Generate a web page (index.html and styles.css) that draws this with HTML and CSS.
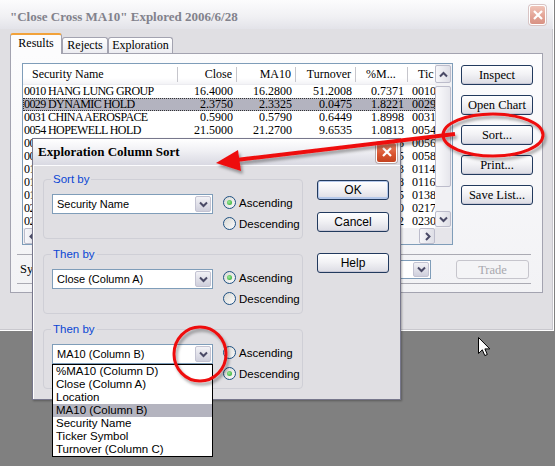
FILE: index.html
```html
<!DOCTYPE html>
<html lang="en">
<head>
    <meta charset="UTF-8">
    <title>Exploration Column Sort</title>
    <link rel="stylesheet" href="styles.css">
</head>
<body>
<div class="desktop">

    <!-- explorer results window (inactive) -->
    <div class="main">
        <div class="main-title">
            <span class="title">"Close Cross MA10" Explored 2006/6/28</span>
            <span class="close-btn faded">
                <svg viewBox="0 0 12 12" width="12" height="12"><path d="M2 2 L10 10 M10 2 L2 10" stroke="#fff" stroke-width="2.2" fill="none"/></svg>
            </span>
        </div>
        <div class="main-body">
            <div class="tabs">
                <div class="tab active w-results">Results</div>
                <div class="tab w-rejects">Rejects</div>
                <div class="tab w-explo">Exploration</div>
            </div>
            <div class="tab-panel">
                <div class="results-top">
                    <div class="listview">
                        <div class="lv-area">
                            <div class="lv-row lv-head">
                                <div class="h-name">Security Name</div>
                                <div class="h-num">Close</div>
                                <div class="h-num">MA10</div>
                                <div class="h-num">Turnover</div>
                                <div class="h-left">%M...</div>
                                <div class="h-left last">Tic</div>
                            </div>
                            <div class="lv-row"><div class="c-name">0010 HANG LUNG GROUP</div><div class="num">16.4000</div><div class="num">16.2800</div><div class="num">51.2008</div><div class="num">0.7371</div><div class="tick">0010</div></div>
                            <div class="lv-row selected"><div class="c-name">0029 DYNAMIC HOLD</div><div class="num">2.3750</div><div class="num">2.3325</div><div class="num">0.0475</div><div class="num">1.8221</div><div class="tick">0029</div></div>
                            <div class="lv-row"><div class="c-name">0031 CHINA AEROSPACE</div><div class="num">0.5900</div><div class="num">0.5790</div><div class="num">0.6449</div><div class="num">1.8998</div><div class="tick">0031</div></div>
                            <div class="lv-row"><div class="c-name">0054 HOPEWELL HOLD</div><div class="num">21.5000</div><div class="num">21.2700</div><div class="num">9.6535</div><div class="num">1.0813</div><div class="tick">0054</div></div>
                            <div class="lv-row"><div class="c-name">0056 ALLIED PROP</div><div class="num">1.0500</div><div class="num">1.0420</div><div class="num">3.1180</div><div class="num">1.1126</div><div class="tick">0056</div></div>
                            <div class="lv-row"><div class="c-name">0058 SUNWAY GLOBAL</div><div class="num">0.3100</div><div class="num">0.3050</div><div class="num">0.2214</div><div class="num">0.9635</div><div class="tick">0058</div></div>
                            <div class="lv-row"><div class="c-name">0114 HERALD HOLD</div><div class="num">0.8800</div><div class="num">0.8710</div><div class="num">0.0912</div><div class="num">1.2043</div><div class="tick">0114</div></div>
                            <div class="lv-row"><div class="c-name">0116 CHOW SANG SANG</div><div class="num">6.8500</div><div class="num">6.7400</div><div class="num">1.9870</div><div class="num">1.5318</div><div class="tick">0116</div></div>
                            <div class="lv-row"><div class="c-name">0138 CCT TECH</div><div class="num">0.1950</div><div class="num">0.1930</div><div class="num">0.4415</div><div class="num">0.8825</div><div class="tick">0138</div></div>
                            <div class="lv-row"><div class="c-name">0217 CHINA GRAND</div><div class="num">0.4200</div><div class="num">0.4140</div><div class="num">0.7760</div><div class="num">1.4470</div><div class="tick">0217</div></div>
                            <div class="lv-row"><div class="c-name">0230 MINMETALS LAND</div><div class="num">0.9600</div><div class="num">0.9500</div><div class="num">0.5281</div><div class="num">1.0392</div><div class="tick">0230</div></div>
                        </div>
                        <div class="vscroll">
                            <div class="sb-btn"><svg viewBox="0 0 11 11" width="11" height="11"><path d="M2 7.5 L5.5 4 L9 7.5" stroke="#4a4a66" stroke-width="2" fill="none"/></svg></div>
                            <div class="sb-thumb v"></div>
                            <div class="sb-btn bottom"><svg viewBox="0 0 11 11" width="11" height="11"><path d="M2 3.5 L5.5 7 L9 3.5" stroke="#4a4a66" stroke-width="2" fill="none"/></svg></div>
                        </div>
                        <div class="hscroll">
                            <div class="sb-btn"><svg viewBox="0 0 11 11" width="11" height="11"><path d="M7 2 L3.5 5.5 L7 9" stroke="#4a4a66" stroke-width="2" fill="none"/></svg></div>
                            <div class="sb-thumb h"></div>
                            <div class="sb-btn right"><svg viewBox="0 0 11 11" width="11" height="11"><path d="M4 2 L7.5 5.5 L4 9" stroke="#4a4a66" stroke-width="2" fill="none"/></svg></div>
                        </div>
                        <div class="sb-corner"></div>
                    </div>
                    <div class="side-buttons">
                        <div class="xp-btn serif">Inspect</div>
                        <div class="xp-btn serif">Open Chart</div>
                        <div class="xp-btn serif">Sort...</div>
                        <div class="xp-btn serif">Print...</div>
                        <div class="xp-btn serif">Save List...</div>
                    </div>
                </div>
                <div class="trade-row">
                    <span class="trade-label">Symbol:</span>
                    <div class="combo wide">
                        <span class="combo-text"></span>
                        <span class="drop-btn"><svg viewBox="0 0 11 11" width="11" height="11"><path d="M2 3.5 L5.5 7 L9 3.5" stroke="#4a4a66" stroke-width="2" fill="none"/></svg></span>
                    </div>
                    <div class="xp-btn serif disabled trade">Trade</div>
                </div>
            </div>
        </div>
    </div>

    <!-- sort dialog (active) -->
    <div class="dialog">
        <div class="dlg-title">
            <span class="title">Exploration Column Sort</span>
            <span class="close-btn">
                <svg viewBox="0 0 12 12" width="12" height="12"><path d="M2 2 L10 10 M10 2 L2 10" stroke="#fff" stroke-width="2.2" fill="none"/></svg>
            </span>
        </div>
        <div class="dlg-body">
            <div class="dlg-groups">
                <fieldset class="group">
                    <legend>Sort by</legend>
                    <div class="group-row">
                        <div class="combo">
                            <span class="combo-text">Security Name</span>
                            <span class="drop-btn"><svg viewBox="0 0 11 11" width="11" height="11"><path d="M2 3.5 L5.5 7 L9 3.5" stroke="#4a4a66" stroke-width="2" fill="none"/></svg></span>
                        </div>
                        <div class="radios">
                            <div class="radio-row"><span class="radio on"></span>Ascending</div>
                            <div class="radio-row"><span class="radio"></span>Descending</div>
                        </div>
                    </div>
                </fieldset>
                <fieldset class="group">
                    <legend>Then by</legend>
                    <div class="group-row">
                        <div class="combo">
                            <span class="combo-text">Close (Column A)</span>
                            <span class="drop-btn"><svg viewBox="0 0 11 11" width="11" height="11"><path d="M2 3.5 L5.5 7 L9 3.5" stroke="#4a4a66" stroke-width="2" fill="none"/></svg></span>
                        </div>
                        <div class="radios">
                            <div class="radio-row"><span class="radio on"></span>Ascending</div>
                            <div class="radio-row"><span class="radio"></span>Descending</div>
                        </div>
                    </div>
                </fieldset>
                <fieldset class="group">
                    <legend>Then by</legend>
                    <div class="group-row">
                        <div class="combo open">
                            <span class="combo-text">MA10 (Column B)</span>
                            <span class="drop-btn"><svg viewBox="0 0 11 11" width="11" height="11"><path d="M2 3.5 L5.5 7 L9 3.5" stroke="#4a4a66" stroke-width="2" fill="none"/></svg></span>
                            <ul class="drop-list">
                                <li>%MA10 (Column D)</li>
                                <li>Close (Column A)</li>
                                <li>Location</li>
                                <li class="hl">MA10 (Column B)</li>
                                <li>Security Name</li>
                                <li>Ticker Symbol</li>
                                <li>Turnover (Column C)</li>
                            </ul>
                        </div>
                        <div class="radios">
                            <div class="radio-row"><span class="radio"></span>Ascending</div>
                            <div class="radio-row"><span class="radio on"></span>Descending</div>
                        </div>
                    </div>
                </fieldset>
            </div>
            <div class="dlg-buttons">
                <div class="xp-btn default">OK</div>
                <div class="xp-btn cancel">Cancel</div>
                <div class="xp-btn help">Help</div>
            </div>
        </div>
    </div>

    <!-- red markup drawn over the screenshot -->
    <svg class="marks" width="555" height="466" viewBox="0 0 555 466">
        <defs>
            <filter id="shade" x="-20%" y="-20%" width="140%" height="140%">
                <feDropShadow dx="2" dy="3" stdDeviation="1.8" flood-color="#000" flood-opacity="0.35"/>
            </filter>
        </defs>
        <g filter="url(#shade)">
            <ellipse cx="493" cy="135" rx="50" ry="21" fill="none" stroke="#ee1111" stroke-width="3"/>
            <line x1="455" y1="134" x2="236" y2="160" stroke="#ee1111" stroke-width="4"/>
            <polygon points="216,163 241,171 238,150" fill="#ee1111"/>
            <ellipse cx="200" cy="354" rx="26" ry="27" fill="none" stroke="#ee1111" stroke-width="3"/>
        </g>
    </svg>

    <svg class="pointer" width="14" height="22" viewBox="0 0 14 22">
        <path d="M0.5 0.5 L0.5 16.5 L4.3 12.8 L6.8 18.6 L9.3 17.5 L6.9 11.9 L11.8 11.9 Z" fill="#fff" stroke="#000" stroke-width="1"/>
    </svg>
</div>
</body>
</html>
```

FILE: styles.css
```css
* {
    margin: 0;
    padding: 0;
    box-sizing: border-box;
}

body {
    width: 555px;
    height: 466px;
    overflow: hidden;
    background: #808080;
    font-family: "Liberation Sans", Arial, sans-serif;
    font-size: 11px;
    color: #000;
}

.desktop {
    position: relative;
    width: 555px;
    height: 466px;
}

.serif {
    font-family: "Liberation Serif", "Times New Roman", serif;
}

/* ---------- main window ---------- */

.main {
    width: 554px;
    height: 331px;
    background: #e0dfe3;
    border-right: 1px solid #fff;
    border-bottom: 1px solid #fff;
    box-shadow: inset -1px -1px 0 #c9c8ce;
}

.main-title {
    height: 29px;
    display: flex;
    align-items: center;
    padding: 0 7px 0 10px;
    background: linear-gradient(#fcfcfd, #f1f1f4 55%, #e3e3e9);
}

.main-title .title {
    flex: 1;
    padding-top: 4px;
    font: bold 13px "Liberation Serif", serif;
    color: #82828c;
}

.close-btn {
    width: 21px;
    height: 21px;
    display: flex;
    align-items: center;
    justify-content: center;
    border: 1px solid #fff;
    border-radius: 3px;
    background: linear-gradient(#ee8a6e, #d9542f 60%, #c4421f);
    box-shadow: 0 0 0 1px #b8a8a8;
}

.close-btn.faded {
    width: 17px;
    height: 20px;
    background: linear-gradient(#f0c4b8, #e2a294 60%, #d89284);
    box-shadow: 0 0 0 1px #d8c4c4;
}

.main-body {
    padding: 4px 0 0 10px;
}

.tabs {
    display: flex;
    align-items: flex-end;
    height: 20px;
    position: relative;
    z-index: 1;
}

.tab {
    height: 16px;
    border: 1px solid #a3a3b0;
    border-bottom: none;
    border-radius: 3px 3px 0 0;
    background: linear-gradient(#fff, #ececf1);
    font: 12px "Liberation Serif", serif;
    line-height: 15px;
    text-align: center;
}

.tab.active {
    height: 21px;
    margin-bottom: -1px;
    border-top: 2px solid #f2a23a;
    background: #fcfcfd;
    line-height: 17px;
}

.w-results { width: 52px; }
.w-rejects { width: 46px; }
.w-explo { width: 65px; }

.tab-panel {
    width: 533px;
    height: 240px;
    border: 1px solid #a3a3b0;
    background: linear-gradient(#fcfcfd, #f2f2f5);
    padding: 9px 0 0 11px;
}

.results-top {
    display: flex;
}

/* list view */

.listview {
    width: 431px;
    height: 182px;
    border: 1px solid #7f9db9;
    background: #fff;
    display: grid;
    grid-template-columns: 412px 17px;
    grid-template-rows: 164px 16px;
}

.lv-area {
    overflow: hidden;
    font: 12px "Liberation Serif", serif;
}

.lv-row {
    display: grid;
    grid-template-columns: 155px 59px 59px 60px 52px 27px;
    height: 13px;
    line-height: 13px;
    white-space: nowrap;
}

.lv-row > div {
    overflow: hidden;
}

.lv-head {
    height: 21px;
    align-items: center;
    border-bottom: 1px solid #ececf0;
    background: linear-gradient(#fff 70%, #f3f3f6);
}

.lv-head > div {
    height: 15px;
    line-height: 15px;
    border-right: 1px solid #c6c6cc;
}

.lv-head > div.last {
    border-right: none;
}

.h-name {
    padding-left: 9px;
}

.h-num {
    text-align: right;
    padding-right: 4px;
}

.h-left {
    padding-left: 10px;
}

.c-name {
    padding-left: 1px;
    letter-spacing: -0.6px;
}

.num {
    text-align: right;
    padding-right: 4px;
}

.tick {
    padding-left: 4px;
}

.lv-row.selected {
    background: #b3b3bf;
    outline: 1px dotted #333;
    outline-offset: -1px;
}

/* scroll bars */

.vscroll {
    display: flex;
    flex-direction: column;
    padding: 1px 1px 1px 0;
    background: #f1f1f4;
}

.hscroll {
    display: flex;
    padding: 0 0 0 1px;
    background: #f1f1f4;
}

.sb-btn {
    width: 16px;
    height: 18px;
    display: flex;
    align-items: center;
    justify-content: center;
    border: 1px solid #bcbccb;
    border-radius: 2px;
    background: linear-gradient(90deg, #f7f7fa, #dedee6);
}

.sb-btn.bottom {
    margin-top: auto;
    height: 16px;
}

.hscroll .sb-btn {
    height: 16px;
    width: 16px;
}

.hscroll .sb-btn.right {
    margin-left: auto;
}

.sb-thumb {
    border: 1px solid #bcbccb;
    border-radius: 2px;
    background: linear-gradient(90deg, #fbfbfd, #e6e6ec);
}

.sb-thumb.v {
    height: 101px;
    margin-top: 3px;
}

.sb-thumb.h {
    width: 180px;
    margin-left: 2px;
}

.sb-corner {
    background: #e6e5ea;
}

/* buttons */

.side-buttons {
    display: flex;
    flex-direction: column;
    gap: 10px;
    margin: 2px 0 0 8px;
}

.xp-btn {
    width: 72px;
    height: 20px;
    border: 1px solid #223a5e;
    border-radius: 3px;
    background: linear-gradient(#fff, #f2f2f5 45%, #dcdce4);
    box-shadow: inset 0 -1px 0 #c8c8d6;
    text-align: center;
    line-height: 18px;
    font-size: 11px;
}

.xp-btn.serif {
    font-size: 12.5px;
}

.xp-btn.disabled {
    border-color: #c6c5cc;
    background: #f4f4f6;
    box-shadow: none;
    color: #a8a8ae;
}

/* trade row */

.trade-row {
    display: flex;
    align-items: center;
    width: 514px;
    height: 30px;
    margin: 9px 0 0 -5px;
    padding: 0 2px 0 3px;
    border-top: 1px solid #aaaab3;
    border-bottom: 1px solid #aaaab3;
}

.trade-label {
    width: 50px;
    font: 12.5px "Liberation Serif", serif;
}

.combo {
    position: relative;
    width: 161px;
    height: 20px;
    display: flex;
    align-items: center;
    border: 1px solid #7f9db9;
    background: #fff;
    padding: 1px;
}

.combo.wide {
    flex: 1;
    height: 19px;
}

.combo-text {
    flex: 1;
    padding-left: 3px;
    white-space: nowrap;
}

.drop-btn {
    width: 16px;
    height: 100%;
    display: flex;
    align-items: center;
    justify-content: center;
    border: 1px solid #c3c3d2;
    border-radius: 2px;
    background: linear-gradient(#f2f2f6, #cfcfdc);
}

.trade {
    width: 73px;
    height: 19px;
    margin-left: 25px;
}

/* ---------- dialog ---------- */

.dialog {
    position: absolute;
    left: 32px;
    top: 138px;
    width: 369px;
    height: 262px;
    background: #e0dfe3;
    border: 1px solid #77778c;
    box-shadow: inset 1px 1px 0 #fff, 1px 1px 2px rgba(0, 0, 0, 0.3);
    z-index: 5;
}

.dlg-title {
    height: 27px;
    display: flex;
    align-items: center;
    padding: 0 3px 0 5px;
    background: linear-gradient(#ffffff, #f0f0f4 45%, #d9d9e2);
    border-bottom: 1px solid #fbfbfd;
}

.dlg-title .title {
    flex: 1;
    font: bold 13px "Liberation Serif", serif;
}

.dlg-body {
    display: flex;
    padding: 7px 0 0 10px;
}

.dlg-groups {
    width: 260px;
}

.group {
    border: 1px solid #cfcfd6;
    border-radius: 4px;
    padding: 8px 0 4px 8px;
}

.group + .group {
    margin-top: 9px;
}

.group legend {
    margin-left: -1px;
    padding: 0 2px;
    color: #0a46d4;
    line-height: 13px;
    font-size: 11.5px;
}

.group-row {
    display: flex;
}

.radios {
    margin: -2px 0 0 10px;
}

.radio-row {
    height: 21px;
    display: flex;
    align-items: center;
    gap: 3px;
    font-size: 11.5px;
}

.radio {
    width: 13px;
    height: 13px;
    border-radius: 50%;
    border: 1px solid #1d5082;
    background: linear-gradient(135deg, #d8d8d4, #fbfbfb);
    display: flex;
    align-items: center;
    justify-content: center;
}

.radio.on::after {
    content: "";
    width: 5px;
    height: 5px;
    border-radius: 50%;
    background: radial-gradient(circle at 40% 40%, #9bea9b, #21a121);
}

.drop-list {
    position: absolute;
    left: -1px;
    top: 19px;
    width: 161px;
    list-style: none;
    border: 1px solid #000;
    background: #fff;
    z-index: 2;
}

.drop-list li {
    height: 13px;
    line-height: 13px;
    padding-left: 3px;
    font-size: 11.5px;
}

.drop-list li.hl {
    background: #b4b4bf;
}

.dlg-buttons {
    margin-left: 14px;
    padding-top: 7px;
}

.xp-btn.default {
    box-shadow: inset 0 0 0 1px #b4c8ea, inset 0 -2px 0 #b4c8ea;
    font-size: 12px;
}

.xp-btn.cancel {
    margin-top: 12px;
    font-size: 12px;
}

.xp-btn.help {
    margin-top: 21px;
    font-size: 12px;
}

/* ---------- overlays ---------- */

.marks {
    position: absolute;
    left: 0;
    top: 0;
    z-index: 10;
    pointer-events: none;
}

.pointer {
    position: absolute;
    left: 478px;
    top: 337px;
    z-index: 11;
}
```
